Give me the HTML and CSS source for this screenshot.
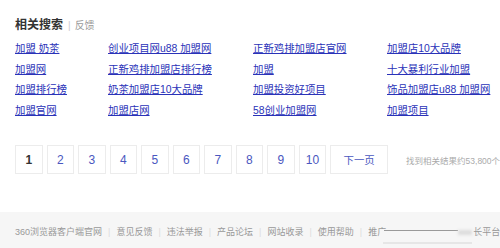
FILE: index.html
```html
<!DOCTYPE html>
<html lang="zh-CN">
<head>
<meta charset="utf-8">
<title>相关搜索</title>
<link rel="stylesheet" href="styles.css">
</head>
<body>
<div class="page">
  <section class="related">
    <h3 class="title">相关搜索<span class="bar">|</span><a class="fb" href="#">反馈</a></h3>
    <div class="grid">
      <a href="#">加盟 奶茶</a>
      <a href="#">创业项目网u88 加盟网</a>
      <a href="#">正新鸡排加盟店官网</a>
      <a href="#">加盟店10大品牌</a>
      <a href="#">加盟网</a>
      <a href="#">正新鸡排加盟店排行榜</a>
      <a href="#">加盟</a>
      <a href="#">十大暴利行业加盟</a>
      <a href="#">加盟排行榜</a>
      <a href="#">奶茶加盟店10大品牌</a>
      <a href="#">加盟投资好项目</a>
      <a href="#">饰品加盟店u88 加盟网</a>
      <a href="#">加盟官网</a>
      <a href="#">加盟店网</a>
      <a href="#">58创业加盟网</a>
      <a href="#">加盟项目</a>
    </div>
  </section>
  <nav class="pager">
    <span class="pg cur">1</span>
    <a class="pg" href="#">2</a>
    <a class="pg" href="#">3</a>
    <a class="pg" href="#">4</a>
    <a class="pg" href="#">5</a>
    <a class="pg" href="#">6</a>
    <a class="pg" href="#">7</a>
    <a class="pg" href="#">8</a>
    <a class="pg" href="#">9</a>
    <a class="pg" href="#">10</a>
    <a class="pg next" href="#">下一页</a>
    <span class="count">找到相关结果约53,800个</span>
  </nav>
  <footer class="foot">
    <div class="links">
      <a href="#">360浏览器客户端官网</a><span class="sep">|</span>
      <a href="#">意见反馈</a><span class="sep">|</span>
      <a href="#">违法举报</a><span class="sep">|</span>
      <a href="#">产品论坛</a><span class="sep">|</span>
      <a href="#">网站收录</a><span class="sep">|</span>
      <a href="#">使用帮助</a><span class="sep">|</span>
      <a href="#" class="promo">推广<span class="strike"></span><span class="smudge"></span>长平台</a>
    </div>
    <span class="shadow"></span>
  </footer>
</div>
</body>
</html>
```

FILE: styles.css
```css
html, body {
  margin: 0;
  padding: 0;
  background: #fff;
  overflow: hidden;
}
body {
  font-family: "Liberation Sans", "Noto Sans CJK SC", sans-serif;
  width: 500px;
  height: 248px;
}
a { text-decoration: none; }

.page {
  display: flex;
  flex-direction: column;
  height: 248px;
}

.related {
  padding: 17px 0 0 15px;
}
.title {
  margin: 0;
  font-size: 12px;
  line-height: 17px;
  font-weight: bold;
  color: #333;
  display: flex;
  align-items: center;
}
.bar {
  font-weight: normal;
  font-size: 10px;
  color: #ccc;
  margin: 0 4px 0 5px;
}
.fb {
  font-weight: normal;
  font-size: 10px;
  color: #999;
}

.grid {
  margin-top: 5px;
  display: grid;
  grid-template-columns: 93px 145px 134px auto;
  grid-auto-rows: 20.5px;
  font-size: 10.4px;
}
.grid a {
  color: #2a32b8;
  text-decoration: underline;
  line-height: 20.5px;
  white-space: nowrap;
}

.pager {
  margin: 24px 0 0 15px;
  display: flex;
  align-items: center;
  gap: 4px;
  white-space: nowrap;
}
.pg {
  box-sizing: border-box;
  width: 28px;
  height: 29px;
  border: 1px solid #ececec;
  display: flex;
  align-items: center;
  justify-content: center;
  font-size: 12px;
  color: #4a57c0;
  background: #fff;
}
.pg.cur {
  color: #333;
  font-weight: bold;
}
.pg.next {
  width: 59px;
  font-size: 10.4px;
}
.count {
  margin-left: 14px;
  font-size: 8.5px;
  color: #aaa;
}

.foot {
  position: relative;
  margin-top: 38px;
  flex: 1;
  background: #f6f6f6;
  padding: 13px 0 0 15px;
}
.links {
  display: flex;
  align-items: center;
  white-space: nowrap;
  font-size: 9px;
  line-height: 14px;
  color: #999;
}
.links a { color: #999; }
.sep {
  color: #ddd;
  margin: 0 6px 0 6px;
}
.promo {
  display: flex;
  align-items: center;
}
.strike {
  display: inline-block;
  width: 74px;
  height: 1px;
  background: #9a9a9a;
  margin: 0 0 4px -2px;
}
.smudge {
  display: inline-block;
  width: 14px;
  height: 5px;
  background: #dcdcdc;
  filter: blur(1.5px);
  margin: 0 1px 0 0;
}
.shadow {
  position: absolute;
  left: 383px;
  top: 30px;
  width: 89px;
  height: 2px;
  background: #e6e6e6;
}
```
